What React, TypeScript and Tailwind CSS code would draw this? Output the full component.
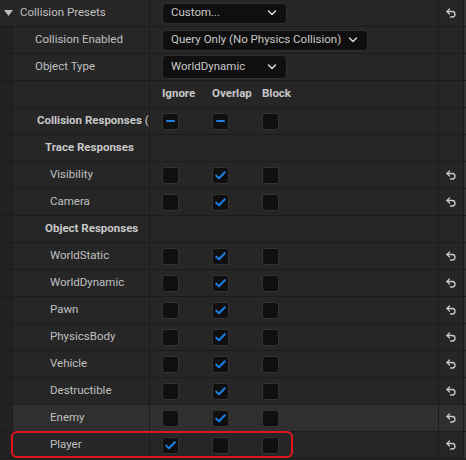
import React from 'react';

type Mark = 'on' | 'off' | 'mixed';

interface RowSpec {
  label: string;
  kind: 'channel' | 'group' | 'summary';
  checks?: Mark[];
  reset?: boolean;
  hover?: boolean;
}

const rows: RowSpec[] = [
  { label: 'Collision Responses', kind: 'summary', checks: ['mixed', 'mixed', 'off'] },
  { label: 'Trace Responses', kind: 'group' },
  { label: 'Visibility', kind: 'channel', checks: ['off', 'on', 'off'], reset: true },
  { label: 'Camera', kind: 'channel', checks: ['off', 'on', 'off'], reset: true },
  { label: 'Object Responses', kind: 'group' },
  { label: 'WorldStatic', kind: 'channel', checks: ['off', 'on', 'off'], reset: true },
  { label: 'WorldDynamic', kind: 'channel', checks: ['off', 'on', 'off'], reset: true },
  { label: 'Pawn', kind: 'channel', checks: ['off', 'on', 'off'], reset: true },
  { label: 'PhysicsBody', kind: 'channel', checks: ['off', 'on', 'off'], reset: true },
  { label: 'Vehicle', kind: 'channel', checks: ['off', 'on', 'off'], reset: true },
  { label: 'Destructible', kind: 'channel', checks: ['off', 'on', 'off'], reset: true },
  { label: 'Enemy', kind: 'channel', checks: ['off', 'on', 'off'], reset: true, hover: true },
  { label: 'Player', kind: 'channel', checks: ['on', 'off', 'off'], reset: true },
];

const ResetIcon = () => (
  <svg width="12" height="12" viewBox="0 0 24 24" fill="none" stroke="#c8c8c8" strokeWidth="2.6" strokeLinecap="round" strokeLinejoin="round">
    <path d="M9 14 4 9l5-5" />
    <path d="M4 9h10.5a5.5 5.5 0 0 1 5.5 5.5a5.5 5.5 0 0 1-5.5 5.5H11" />
  </svg>
);

const Chevron = () => (
  <svg width="10" height="6" viewBox="0 0 10 6" fill="none" stroke="#d0d0d0" strokeWidth="1.6" strokeLinecap="round" strokeLinejoin="round">
    <path d="M1.5 1 5 4.5 8.5 1" />
  </svg>
);

const Checkbox = ({ mark }: { mark: Mark }) => (
  <div className="w-[17px] h-[17px] rounded-[3px] bg-[#0f0f0f] border border-[#333333] flex items-center justify-center">
    {mark === 'on' && (
      <svg width="11" height="9" viewBox="0 0 11 9" fill="none" stroke="#1b7fe6" strokeWidth="2" strokeLinecap="round" strokeLinejoin="round">
        <path d="M1.2 4.6 4 7.3 9.8 1.3" />
      </svg>
    )}
    {mark === 'mixed' && <div className="w-[9px] h-[2px] rounded-full bg-[#1b7fe6]" />}
  </div>
);

const Dropdown = ({ text, width, tall }: { text: string; width: string; tall?: boolean }) => (
  <div
    className={`${width} ${tall ? 'h-[24px]' : 'h-[21px]'} rounded-[4px] bg-[#0f0f0f] border border-[#303030] flex items-center justify-between pl-[8px] pr-[9px]`}
  >
    <span className="text-[#c8c8c8] whitespace-nowrap">{text}</span>
    <Chevron />
  </div>
);

const Row = ({
  children,
  value,
  reset,
  hover,
  indent = true,
}: {
  children?: React.ReactNode;
  value?: React.ReactNode;
  reset?: boolean;
  hover?: boolean;
  indent?: boolean;
}) => (
  <div className={`flex h-[27px] border-b border-[#1c1c1c] ${hover ? 'bg-[#2f2f2f]' : 'bg-[#262626]'}`}>
    {indent && <div className="w-[13px] shrink-0 bg-[#222222] border-r border-[#1c1c1c]" />}
    <div className="flex-1 min-w-0 flex items-center overflow-hidden whitespace-nowrap">{children}</div>
    <div className="w-[289px] shrink-0 border-l border-[#1c1c1c] flex items-center pl-[12px]">{value}</div>
    <div className="w-[25px] shrink-0 border-l border-[#1c1c1c] flex items-center justify-center">
      {reset && <ResetIcon />}
    </div>
    <div className="w-[3px] shrink-0 border-l border-[#1c1c1c] bg-[#333333]" />
  </div>
);

const Checks = ({ marks }: { marks: Mark[] }) => (
  <div className="flex gap-[33px]">
    {marks.map((m, i) => (
      <Checkbox key={i} mark={m} />
    ))}
  </div>
);

export default function App() {
  return (
    <div
      className="relative w-[466px] h-[460px] bg-[#262626] text-[11.5px] text-[#c0c0c0] overflow-hidden"
      style={{ fontFamily: 'Roboto, "Noto Sans", sans-serif' }}
    >
      <Row indent={false} reset value={<Dropdown text="Custom..." width="w-[125px]" />}>
        <svg width="9" height="6" viewBox="0 0 9 6" className="ml-[4px] mr-[7px]">
          <path d="M0 0h9L4.5 6z" fill="#bdbdbd" />
        </svg>
        <span>Collision Presets</span>
      </Row>
      <Row value={<Dropdown text="Query Only (No Physics Collision)" width="w-[206px]" />}>
        <span className="pl-[22px]">Collision Enabled</span>
      </Row>
      <Row value={<Dropdown text="WorldDynamic" width="w-[125px]" tall />}>
        <span className="pl-[22px]">Object Type</span>
      </Row>
      <Row
        value={
          <div className="flex font-bold text-[#c8c8c8]">
            <span className="w-[50px]">Ignore</span>
            <span className="w-[50px]">Overlap</span>
            <span>Block</span>
          </div>
        }
      />
      {rows.map((r) => (
        <Row key={r.label} reset={r.reset} hover={r.hover} value={r.checks && <Checks marks={r.checks} />}>
          {r.kind === 'summary' && (
            <span className="pl-[24px] font-bold text-[#c8c8c8]">
              Collision Responses <span className="font-normal">(</span>
            </span>
          )}
          {r.kind === 'group' && <span className="pl-[32px] font-bold text-[#c8c8c8]">{r.label}</span>}
          {r.kind === 'channel' && <span className="pl-[37px]">{r.label}</span>}
        </Row>
      ))}
      <div className="absolute left-[11px] top-[431px] w-[282px] h-[27px] rounded-[6px] border-2 border-[#e0161c]" />
    </div>
  );
}
